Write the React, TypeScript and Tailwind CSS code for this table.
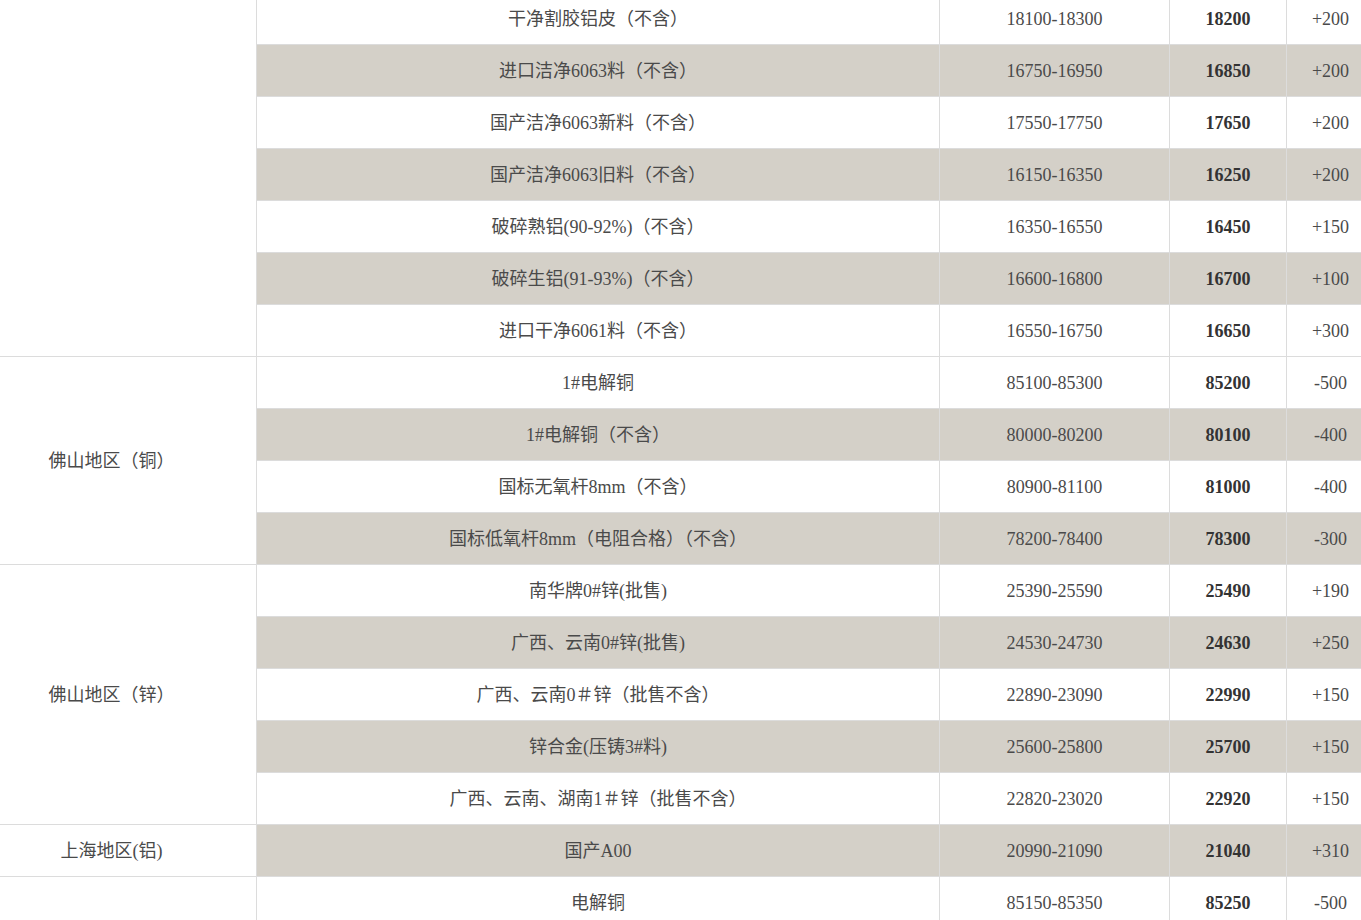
import React from "react";

type Row = [string, string, string, string, boolean];
type Group = { label: string; rows: Row[] };

const groups: Group[] = [
  {
    label: "",
    rows: [
      ["干净割胶铝皮（不含）", "18100-18300", "18200", "+200", false],
      ["进口洁净6063料（不含）", "16750-16950", "16850", "+200", true],
      ["国产洁净6063新料（不含）", "17550-17750", "17650", "+200", false],
      ["国产洁净6063旧料（不含）", "16150-16350", "16250", "+200", true],
      ["破碎熟铝(90-92%)（不含）", "16350-16550", "16450", "+150", false],
      ["破碎生铝(91-93%)（不含）", "16600-16800", "16700", "+100", true],
      ["进口干净6061料（不含）", "16550-16750", "16650", "+300", false],
    ],
  },
  {
    label: "佛山地区（铜）",
    rows: [
      ["1#电解铜", "85100-85300", "85200", "-500", false],
      ["1#电解铜（不含）", "80000-80200", "80100", "-400", true],
      ["国标无氧杆8mm（不含）", "80900-81100", "81000", "-400", false],
      ["国标低氧杆8mm（电阻合格）（不含）", "78200-78400", "78300", "-300", true],
    ],
  },
  {
    label: "佛山地区（锌）",
    rows: [
      ["南华牌0#锌(批售)", "25390-25590", "25490", "+190", false],
      ["广西、云南0#锌(批售)", "24530-24730", "24630", "+250", true],
      ["广西、云南0＃锌（批售不含）", "22890-23090", "22990", "+150", false],
      ["锌合金(压铸3#料)", "25600-25800", "25700", "+150", true],
      ["广西、云南、湖南1＃锌（批售不含）", "22820-23020", "22920", "+150", false],
    ],
  },
  {
    label: "上海地区(铝)",
    rows: [["国产A00", "20990-21090", "21040", "+310", true]],
  },
  {
    label: "",
    rows: [["电解铜", "85150-85350", "85250", "-500", false]],
  },
];

export default function App() {
  return (
    <div className="w-[1361px] h-[920px] overflow-hidden bg-white font-['Liberation_Serif','Noto_Sans_CJK_SC',serif] text-[18px] text-[#4a4a4a]">
      <table className="table-fixed border-separate border-spacing-0 w-[1374px] -mt-[7px]">
        <colgroup>
          <col className="w-[257px]" />
          <col className="w-[683px]" />
          <col className="w-[230px]" />
          <col className="w-[117px]" />
          <col className="w-[87px]" />
        </colgroup>
        <tbody>
          {groups.map((g, gi) =>
            g.rows.map((r, ri) => {
              const bg = r[4] ? "bg-[#d4d0c8]" : "bg-white";
              return (
                <tr key={gi + "-" + ri} className="h-[52px]">
                  {ri === 0 && (
                    <td
                      rowSpan={g.rows.length}
                      className="bg-white border-r border-b border-[#dcdcdc] text-center align-middle p-0 pt-[1px] pr-[33px]"
                    >
                      {g.label}
                    </td>
                  )}
                  <td className={`${bg} border-r border-b border-[#dcdcdc] text-center p-0 pt-[1px]`}>{r[0]}</td>
                  <td className={`${bg} border-r border-b border-[#dcdcdc] text-center p-0 pt-[1px]`}>{r[1]}</td>
                  <td className={`${bg} border-r border-b border-[#dcdcdc] text-center p-0 pt-[1px] font-bold text-[#333]`}>{r[2]}</td>
                  <td className={`${bg} border-b border-[#dcdcdc] text-center p-0 pt-[1px]`}>{r[3]}</td>
                </tr>
              );
            })
          )}
        </tbody>
      </table>
    </div>
  );
}
